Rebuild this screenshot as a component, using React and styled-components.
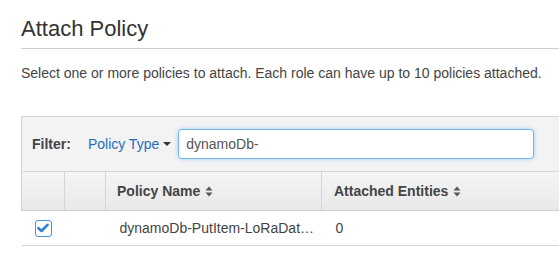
import React from 'react'
import styled, { createGlobalStyle } from 'styled-components'

const GlobalStyle = createGlobalStyle`
  html, body {
    margin: 0;
    padding: 0;
    background: #fff;
    overflow: hidden;
  }
  body {
    font-family: "Liberation Sans", Arial, Helvetica, sans-serif;
    color: #444;
  }
`

function SortIcon() {
  return (
    <svg width="8" height="11" viewBox="0 0 8 11" aria-hidden="true">
      <path d="M4 0.5 L7.5 4.5 L0.5 4.5 Z" fill="#555" />
      <path d="M4 10.5 L7.5 6.5 L0.5 6.5 Z" fill="#555" />
    </svg>
  )
}

function CheckIcon() {
  return (
    <svg width="12" height="10" viewBox="0 0 12 10" aria-hidden="true">
      <path
        d="M1.5 5.2 L4.5 8 L10.5 1.8"
        fill="none"
        stroke="#2f7fd8"
        strokeWidth="2.6"
        strokeLinecap="round"
        strokeLinejoin="round"
      />
    </svg>
  )
}

export default function App() {
  return (
    <Page>
      <GlobalStyle />
      <Title>Attach Policy</Title>
      <Description>
        Select one or more policies to attach. Each role can have up to 10 policies attached.
      </Description>

      <Panel>
        <FilterBar>
          <FilterLabel>Filter:</FilterLabel>
          <TypeMenu>
            Policy Type <Caret />
          </TypeMenu>
          <SearchInput type="text" defaultValue="dynamoDb-" />
        </FilterBar>

        <Table>
          <colgroup>
            <col style={{ width: 43 }} />
            <col style={{ width: 41 }} />
            <col style={{ width: 216 }} />
            <col />
          </colgroup>
          <thead>
            <tr>
              <HeadCell $first />
              <HeadCell />
              <HeadCell $pad={11}>
                <HeadInner>
                  Policy Name <SortIcon />
                </HeadInner>
              </HeadCell>
              <HeadCell $pad={12}>
                <HeadInner>
                  Attached Entities <SortIcon />
                </HeadInner>
              </HeadCell>
            </tr>
          </thead>
          <tbody>
            <tr>
              <Cell $center>
                <CheckBox>
                  <CheckIcon />
                </CheckBox>
              </Cell>
              <Cell />
              <Cell $pad={14}>
                <Ellipsis>dynamoDb-PutItem-LoRaDataTable</Ellipsis>
              </Cell>
              <Cell $pad={14}>0</Cell>
            </tr>
          </tbody>
        </Table>
      </Panel>
    </Page>
  )
}

const Page = styled.div`
  width: 640px;
  padding: 17px 0 0 21px;
`

const Title = styled.h1`
  margin: 0;
  font-size: 22px;
  font-weight: 400;
  line-height: 24px;
  color: #333;
  padding-bottom: 7px;
  border-bottom: 1px solid #cfcfcf;
`

const Description = styled.p`
  margin: 16px 0 0;
  font-size: 14px;
  line-height: 16px;
  color: #444;
`

const Panel = styled.div`
  margin-top: 35px;
  border-top: 1px solid #d5d5d5;
`

const FilterBar = styled.div`
  height: 55px;
  display: flex;
  align-items: center;
  padding-left: 10px;
  background: #f3f3f3;
  border-left: 1px solid #d5d5d5;
  border-bottom: 1px solid #d5d5d5;
  box-sizing: border-box;
`

const FilterLabel = styled.span`
  font-size: 14px;
  font-weight: 700;
  color: #444;
  margin-right: 17px;
`

const TypeMenu = styled.span`
  display: flex;
  align-items: center;
  font-size: 14px;
  color: #1f6ebc;
  margin-right: 7px;
  cursor: pointer;
`

const Caret = styled.span`
  display: inline-block;
  width: 0;
  height: 0;
  margin-left: 4px;
  border-left: 4px solid transparent;
  border-right: 4px solid transparent;
  border-top: 4px solid #333;
`

const SearchInput = styled.input`
  width: 356px;
  height: 30px;
  box-sizing: border-box;
  padding: 0 7px;
  font-family: "Liberation Sans", Arial, sans-serif;
  font-size: 14px;
  color: #555;
  border: 1px solid #73b4ec;
  border-radius: 4px;
  box-shadow: 0 0 4px rgba(102, 175, 233, 0.6);
  outline: none;
  background: #fff;
`

const Table = styled.table`
  width: 100%;
  border-collapse: collapse;
  table-layout: fixed;
`

const HeadCell = styled.th`
  height: 38px;
  padding: 0 0 0 ${p => p.$pad || 0}px;
  text-align: left;
  font-size: 14px;
  font-weight: 700;
  color: #444;
  background: linear-gradient(#f5f5f5, #e8e8e8);
  border-left: 1px solid #d5d5d5;
  border-bottom: 1px solid #cfcfcf;
`

const HeadInner = styled.span`
  display: inline-flex;
  align-items: center;
  gap: 5px;
`

const Cell = styled.td`
  height: 34px;
  padding: 0 0 0 ${p => p.$pad || 0}px;
  text-align: ${p => (p.$center ? 'center' : 'left')};
  font-size: 14px;
  color: #444;
  background: #fff;
  border-bottom: 1px solid #d5d5d5;
  vertical-align: middle;
`

const CheckBox = styled.span`
  display: inline-flex;
  align-items: center;
  justify-content: center;
  width: 17px;
  height: 17px;
  box-sizing: border-box;
  border: 1.5px solid #4a90dd;
  border-radius: 3px;
  background: #fff;
  vertical-align: middle;
`

const Ellipsis = styled.div`
  width: 197px;
  overflow: hidden;
  white-space: nowrap;
  text-overflow: ellipsis;
`
